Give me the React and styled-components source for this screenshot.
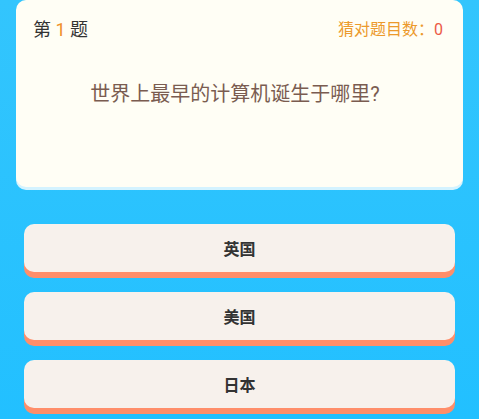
import React from "react";
import styled, { createGlobalStyle } from "styled-components";

const GlobalStyle = createGlobalStyle`
  html, body {
    margin: 0;
    padding: 0;
    background: #2dc4ff;
    font-family: Roboto, "Noto Sans CJK SC", "Noto Sans", sans-serif;
  }
`;

const options = ["英国", "美国", "日本"];

const App = () => {
  return (
    <Page>
      <GlobalStyle />
      <Card>
        <CardHeader>
          <Index>
            第 <b>1</b> 题
          </Index>
          <Score>
            猜对题目数：<span>0</span>
          </Score>
        </CardHeader>
        <Question>世界上最早的计算机诞生于哪里?</Question>
      </Card>
      <Options>
        {options.map((o) => (
          <Option key={o}>{o}</Option>
        ))}
      </Options>
    </Page>
  );
};

export default App;

const Page = styled.div`
  min-height: 419px;
  padding: 0 16px;
  background: linear-gradient(180deg, #33c5fd 0%, #22c0ff 100%);
  box-sizing: border-box;
  overflow: hidden;
`;

const Card = styled.div`
  height: 187px;
  background: #fffef5;
  border-radius: 10px;
  box-shadow: 0 3px 0 rgba(255, 255, 255, 0.8);
  padding: 16px 18px 0 17px;
  box-sizing: border-box;
`;

const CardHeader = styled.div`
  display: flex;
  justify-content: space-between;
  align-items: center;
  height: 24px;
`;

const Index = styled.div`
  font-size: 18px;
  color: #333;
  b {
    font-weight: normal;
    color: #f0902a;
  }
`;

const Score = styled.div`
  font-size: 16px;
  color: #ec9a2c;
  padding-right: 2px;
  span {
    color: #ec5a45;
  }
`;

const Question = styled.div`
  margin-top: 40px;
  text-align: center;
  font-size: 20px;
  line-height: 28px;
  color: #7a5c50;
  padding-right: 8px;
`;

const Options = styled.div`
  display: flex;
  flex-direction: column;
  gap: 20px;
  padding: 37px 8px 0;
`;

const Option = styled.button`
  height: 48px;
  border: none;
  border-radius: 10px;
  background: #f7f1ec;
  box-shadow: 0 6px 0 #ff8e6a;
  font-family: inherit;
  font-size: 16px;
  font-weight: bold;
  color: #333;
  cursor: pointer;
`;
